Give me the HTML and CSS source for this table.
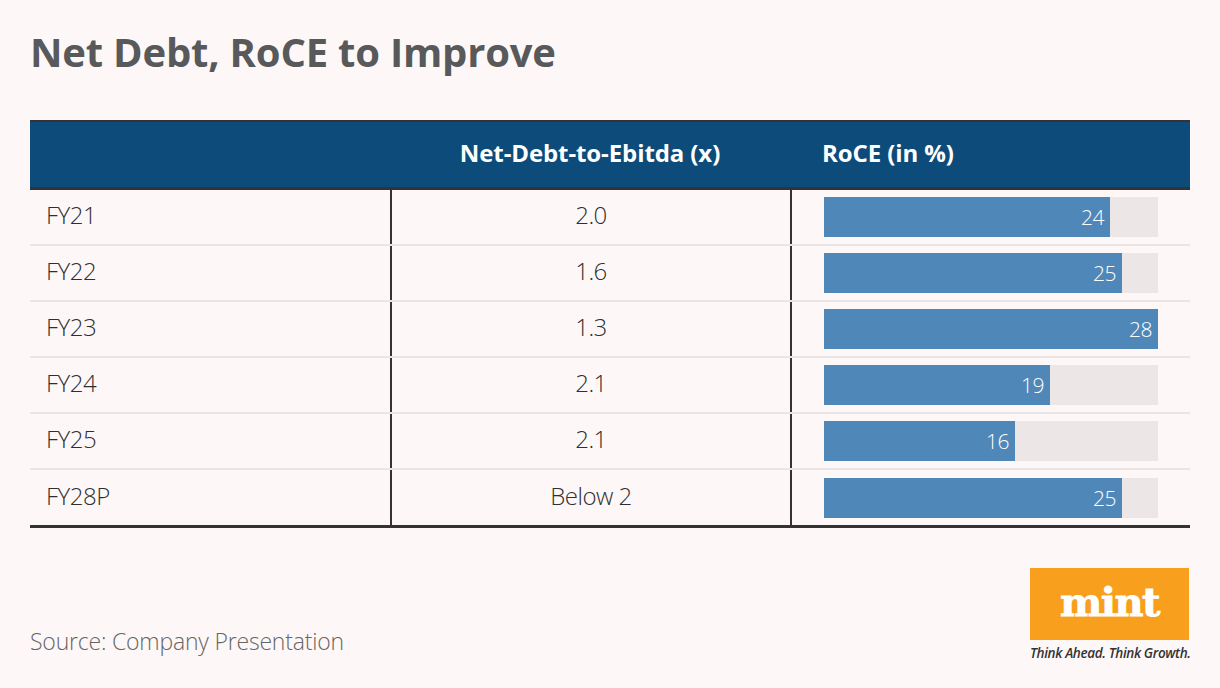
FILE: index.html
```html
<!DOCTYPE html>
<html lang="en">
<head>
<meta charset="utf-8">
<title>Net Debt, RoCE to Improve</title>
<link rel="stylesheet" href="styles.css">
</head>
<body>
<main class="page">
  <h1 class="title">Net Debt, RoCE to Improve</h1>

  <section class="table">
    <div class="thead">
      <div class="th"></div>
      <div class="th th-center">Net-Debt-to-Ebitda (x)</div>
      <div class="th th-left">RoCE (in %)</div>
    </div>

    <div class="row">
      <div class="cell cell-label">FY21</div>
      <div class="cell cell-center">2.0</div>
      <div class="cell cell-bar"><div class="track"><div class="bar" style="width:286px"><span>24</span></div></div></div>
    </div>
    <div class="row">
      <div class="cell cell-label">FY22</div>
      <div class="cell cell-center">1.6</div>
      <div class="cell cell-bar"><div class="track"><div class="bar" style="width:298px"><span>25</span></div></div></div>
    </div>
    <div class="row">
      <div class="cell cell-label">FY23</div>
      <div class="cell cell-center">1.3</div>
      <div class="cell cell-bar"><div class="track"><div class="bar" style="width:334px"><span>28</span></div></div></div>
    </div>
    <div class="row">
      <div class="cell cell-label">FY24</div>
      <div class="cell cell-center">2.1</div>
      <div class="cell cell-bar"><div class="track"><div class="bar" style="width:226px"><span>19</span></div></div></div>
    </div>
    <div class="row">
      <div class="cell cell-label">FY25</div>
      <div class="cell cell-center">2.1</div>
      <div class="cell cell-bar"><div class="track"><div class="bar" style="width:191px"><span>16</span></div></div></div>
    </div>
    <div class="row row-last">
      <div class="cell cell-label">FY28P</div>
      <div class="cell cell-center">Below 2</div>
      <div class="cell cell-bar"><div class="track"><div class="bar" style="width:298px"><span>25</span></div></div></div>
    </div>
  </section>

  <footer class="footer">
    <p class="source">Source: Company Presentation</p>
    <div class="brand">
      <div class="logo"><span class="logo-text">mint</span></div>
      <div class="tagline">Think Ahead. Think Growth.</div>
    </div>
  </footer>
</main>
</body>
</html>
```

FILE: styles.css
```css
* { box-sizing: border-box; }

html, body {
  margin: 0;
  padding: 0;
  background: #fdf8f7;
}

body {
  font-family: "Open Sans", "Noto Sans", sans-serif;
  color: #2f2f2f;
}

.page {
  width: 1220px;
  height: 688px;
  padding: 24px 30px 0 30px;
}

.title {
  margin: 0;
  font-size: 40px;
  line-height: 56px;
  font-weight: 700;
  color: #58595b;
  letter-spacing: -0.2px;
}

.table {
  margin-top: 40px;
  width: 1160px;
  border-top: 2px solid #333333;
  border-bottom: 3px solid #333333;
}

.thead {
  display: grid;
  grid-template-columns: 360px 400px 400px;
  height: 68px;
  background: #0d4b7a;
  border-bottom: 3px solid #333333;
  color: #ffffff;
}

.th {
  display: flex;
  align-items: center;
  padding-bottom: 5px;
  font-size: 24px;
  font-weight: 700;
  letter-spacing: -0.1px;
}

.th-center { justify-content: center; }
.th-left { padding-left: 32px; }

.row {
  display: grid;
  grid-template-columns: 360px 400px 400px;
  height: 56px;
  border-bottom: 2px solid #ebe5e4;
}

.row-last {
  height: 55px;
  border-bottom: none;
}

.cell {
  display: flex;
  align-items: center;
  font-size: 24px;
  font-weight: 300;
  color: #2f2f2f;
  letter-spacing: -0.5px;
}

.cell-label { padding: 0 0 5px 16px; }

.cell-center {
  justify-content: center;
  padding-bottom: 5px;
  border-left: 2px solid #333333;
}

.cell-bar {
  border-left: 2px solid #333333;
  padding-left: 32px;
}

.track {
  width: 334px;
  height: 40px;
  background: #ece7e6;
}

.bar {
  height: 40px;
  background: #5087b9;
  display: flex;
  align-items: center;
  justify-content: flex-end;
  padding-right: 6px;
}

.bar span {
  color: #ffffff;
  font-size: 21px;
  font-weight: 300;
  letter-spacing: -0.5px;
}

.footer {
  display: flex;
  justify-content: space-between;
  align-items: flex-start;
  margin-top: 40px;
}

.source {
  margin: 58px 0 0 0;
  font-size: 23px;
  line-height: 30px;
  font-weight: 300;
  color: #666666;
  letter-spacing: -0.2px;
}

.brand {
  display: flex;
  flex-direction: column;
  width: 160px;
}

.logo {
  width: 159px;
  height: 72px;
  background: #f99f1e;
  display: flex;
  align-items: center;
  justify-content: center;
}

.logo-text {
  font-family: "DejaVu Serif", "Liberation Serif", serif;
  font-weight: 700;
  font-size: 40px;
  line-height: 1;
  color: #ffffff;
  letter-spacing: -1.5px;
  padding-bottom: 4px;
  -webkit-text-stroke: 0.8px #ffffff;
}

.tagline {
  margin-top: 4px;
  font-size: 13.5px;
  line-height: 18px;
  font-style: italic;
  font-weight: 600;
  color: #333333;
  letter-spacing: -0.35px;
  white-space: nowrap;
}
```
